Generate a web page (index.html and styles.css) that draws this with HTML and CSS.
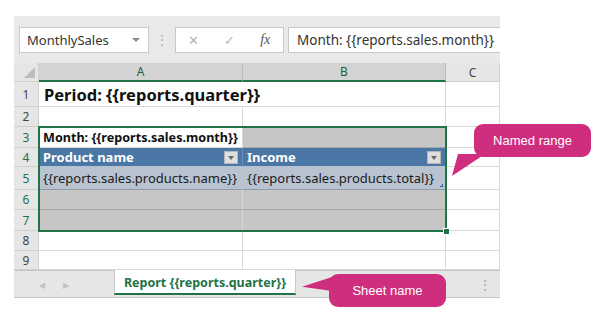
FILE: index.html
```html
<!DOCTYPE html>
<html>
<head>
    <meta charset="UTF-8">
    <title>Named range</title>
    <link rel="stylesheet" href="styles.css">
</head>
<body>

<div class="page">
    <div class="book">
        <div class="toolbar">
            <div class="namebox"><span>MonthlySales</span><span class="caret"></span></div>
            <div class="grip">&#8942;</div>
            <div class="fxbtns">
                <span class="btn">&#10005;</span>
                <span class="btn">&#10003;</span>
                <span class="btn fx">fx</span>
            </div>
            <div class="formula">Month: {{reports.sales.month}}</div>
        </div>

        <div class="sheet">
            <div class="hd corner"><span class="tri"></span></div>
            <div class="hd col on">A</div>
            <div class="hd col on">B</div>
            <div class="hd col">C</div>

            <div class="hd row">1</div>
            <div class="c title span2">Period: {{reports.quarter}}</div>
            <div class="c"></div>

            <div class="hd row">2</div>
            <div class="c"></div>
            <div class="c"></div>
            <div class="c"></div>

            <div class="hd row on">3</div>
            <div class="c active">Month: {{reports.sales.month}}</div>
            <div class="c sel"></div>
            <div class="c"></div>

            <div class="hd row on">4</div>
            <div class="c thead">Product name<span class="filter"></span></div>
            <div class="c thead">Income<span class="filter"></span></div>
            <div class="c"></div>

            <div class="hd row on">5</div>
            <div class="c tbody">{{reports.sales.products.name}}</div>
            <div class="c tbody">{{reports.sales.products.total}}<span class="resize"></span></div>
            <div class="c"></div>

            <div class="hd row on">6</div>
            <div class="c sel"></div>
            <div class="c sel"></div>
            <div class="c"></div>

            <div class="hd row on">7</div>
            <div class="c sel"></div>
            <div class="c sel"></div>
            <div class="c"></div>

            <div class="hd row">8</div>
            <div class="c"></div>
            <div class="c"></div>
            <div class="c"></div>

            <div class="hd row">9</div>
            <div class="c"></div>
            <div class="c"></div>
            <div class="c"></div>

            <div class="selection"><span class="handle"></span></div>
        </div>

        <div class="tabs">
            <div class="nav"><span>&#9664;</span><span>&#9654;</span></div>
            <div class="tab">Report {{reports.quarter}}</div>
            <div class="spacer"></div>
            <div class="more">&#8942;</div>
        </div>
    </div>

    <div class="callout named">Named range</div>
    <div class="callout sheetname">Sheet name</div>
</div>

</body>
</html>
```

FILE: styles.css
```css
* { margin: 0; padding: 0; box-sizing: border-box;}
body { background: #fff; font-family: "Noto Sans", "Open Sans", sans-serif; color: #222;}
.page { position: relative; width: 603px; height: 318px; padding: 16px 0 0 14px;}
.book { width: 486px;}

/* formula bar */
.toolbar { display: flex; align-items: center; height: 47px; padding: 0 0 0 5px; background: #e9e9e9;}
.namebox { display: flex; align-items: center; justify-content: space-between; width: 130px; height: 26px; padding: 0 8px 0 7px; background: #fff; border: 1px solid #c8c8c8; font-size: 13px; color: #333;}
.caret { width: 0; height: 0; border-left: 4px solid transparent; border-right: 4px solid transparent; border-top: 4px solid #888;}
.grip { width: 26px; text-align: center; color: #b5b5b5; font-size: 14px;}
.fxbtns { display: flex; width: 109px; height: 26px; background: #fff; border: 1px solid #c8c8c8;}
.fxbtns .btn { flex: 1; display: flex; align-items: center; justify-content: center; color: #b4b4b4; font-size: 13px;}
.fxbtns .fx { color: #555; font-family: "Liberation Serif", serif; font-style: italic; font-size: 14px;}
.formula { flex: 1; height: 26px; margin-left: 4px; padding-left: 8px; display: flex; align-items: center; background: #fff; border: 1px solid #c8c8c8; border-right: none; font-size: 13.5px; color: #333; white-space: nowrap; overflow: hidden;}

/* grid */
.sheet { position: relative; display: grid; grid-template-columns: 25px 204px 203px 54px; grid-template-rows: 19px 25px 20px 21px 19px 23px 20px 21px 20px 19px; background: #fff;}
.hd { background: #e6e6e6; color: #444; font-size: 12px; display: flex; align-items: center; justify-content: center; border-right: 1px solid #cfcfcf; border-bottom: 1px solid #cfcfcf;}
.hd.col.on { background: #d3d3d3; color: #1e5e3b; border-bottom: 2px solid #217346; border-right-color: #b9b9b9;}
.hd.row.on { color: #217346;}
.corner { position: relative;}
.tri { position: absolute; right: 3px; bottom: 3px; width: 0; height: 0; border-left: 11px solid transparent; border-bottom: 11px solid #bdbdbd;}
.c { display: flex; align-items: center; padding: 0 4px; font-size: 13px; white-space: nowrap; border-right: 1px solid #d9d9d9; border-bottom: 1px solid #d9d9d9; position: relative;}
.span2 { grid-column: span 2;}
.title { font-weight: bold; font-size: 16.5px; color: #111; padding-left: 5px;}
.active { font-weight: bold; font-size: 12.6px; color: #111; background: #fff;}
.sel { background: #c6c6c6; border-right-color: #d8d8d8; border-bottom-color: #a8a8a8;}
.thead { background: #4a77a5; color: #fff; font-weight: bold; justify-content: space-between; border-right-color: #6f90b6; border-bottom-color: #b5c2d1;}
.filter { width: 14px; height: 13px; background: #dedede; border: 1px solid #b5b5b5; position: relative;}
.filter::after { content: ""; position: absolute; left: 3px; top: 4px; border-left: 3px solid transparent; border-right: 3px solid transparent; border-top: 4px solid #666;}
.tbody { background: #b8c3cf; color: #1b1b1b; border-right-color: #b8c3cf; border-bottom-color: #8e9aa8;}
.resize { position: absolute; right: 2px; bottom: 2px; width: 3px; height: 3px; border-right: 1px solid #2f5d9b; border-bottom: 1px solid #2f5d9b;}
.selection { position: absolute; left: 24px; top: 63px; width: 409px; height: 106px; border: 2px solid #217346; pointer-events: none;}
.handle { position: absolute; right: -5px; bottom: -5px; width: 7px; height: 7px; background: #217346; border: 1px solid #fff;}

/* sheet tabs */
.tabs { display: flex; height: 28px; background: #e6e6e6; border-top: 1px solid #c6c6c6; border-bottom: 1px solid #c6c6c6;}
.nav { width: 100px; flex: none; display: flex; align-items: center; gap: 18px; padding-left: 25px; color: #c2c2c2; font-size: 8px;}
.tab { width: 182px; flex: none; margin-top: -1px; padding-top: 2px; display: flex; align-items: center; justify-content: center; background: #fff; color: #217346; font-weight: bold; font-size: 12.5px; border-left: 1px solid #c6c6c6; border-right: 1px solid #c6c6c6; border-bottom: 2px solid #217346; height: 25px;}
.spacer { flex: 1;}
.more { width: 30px; display: flex; align-items: center; justify-content: center; color: #a8a8a8; font-size: 14px;}

/* callouts */
.callout { position: absolute; width: 117px; height: 33px; display: flex; align-items: center; justify-content: center; background: #cf2e7e; color: #fff; border-radius: 9px; font-family: "Liberation Sans", Arial, sans-serif; font-size: 13px;}
.callout::before { content: ""; position: absolute; background: #cf2e7e;}
.named { left: 474px; top: 124px;}
.named::before { left: -22px; top: 30px; width: 60px; height: 22px; clip-path: polygon(0 100%, 6px 0, 33px 0);}
.sheetname { left: 329px; top: 274px;}
.sheetname::before { left: -27px; top: 3px; width: 30px; height: 14px; clip-path: polygon(0 70%, 100% 0, 100% 100%);}
```
